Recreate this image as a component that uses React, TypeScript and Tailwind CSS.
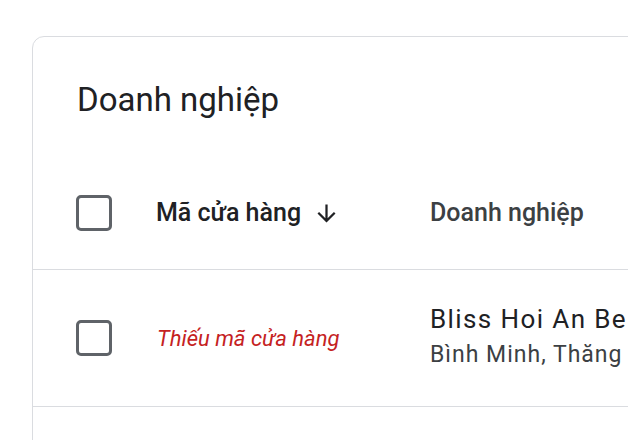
export default function App() {
    return (
        <div className="w-[628px] h-[440px] overflow-hidden bg-white pt-[36px] pl-[32px] font-['Roboto',sans-serif]">
            <div className="w-[800px] min-h-[500px] border border-[#dadce0] rounded-xl">
                {/* Title */}
                <h1 className="pl-[44px] pt-[43px] text-[33px] leading-[40px] text-[#202124] font-normal">
                    Doanh nghiệp
                </h1>

                {/* Header row */}
                <div className="mt-[37px] h-[113px] flex items-center border-b border-[#dadce0] pl-[43px]">
                    <div className="w-[36px] h-[36px] rounded-[5px] border-[3.5px] border-[#5f6368] shrink-0" />
                    <div className="w-[318px] pl-[44px] flex items-center gap-[12px]">
                        <span className="text-[25px] font-medium text-[#202124]">Mã cửa hàng</span>
                        <svg width="27" height="27" viewBox="0 0 24 24" className="fill-[#202124]">
                            <path d="M20 12l-1.41-1.41L13 16.17V4h-2v12.17l-5.58-5.59L4 12l8 8 8-8z" />
                        </svg>
                    </div>
                    <span className="text-[25px] font-medium text-[#3c4043]">Doanh nghiệp</span>
                </div>

                {/* Data row */}
                <div className="h-[137px] flex items-center border-b border-[#dadce0] pl-[43px]">
                    <div className="w-[36px] h-[36px] rounded-[5px] border-[3.5px] border-[#5f6368] shrink-0" />
                    <div className="w-[318px] pl-[45px]">
                        <span className="text-[22px] italic text-[#c5221f]">Thiếu mã cửa hàng</span>
                    </div>
                    <div className="flex flex-col pt-[2px]">
                        <span className="text-[26px] leading-[32px] tracking-[1.4px] text-[#202124] whitespace-nowrap">Bliss Hoi An Be</span>
                        <span className="text-[23px] leading-[40px] tracking-[1px] text-[#3c4043] whitespace-nowrap">Bình Minh, Thăng</span>
                    </div>
                </div>
            </div>
        </div>
    );
}
